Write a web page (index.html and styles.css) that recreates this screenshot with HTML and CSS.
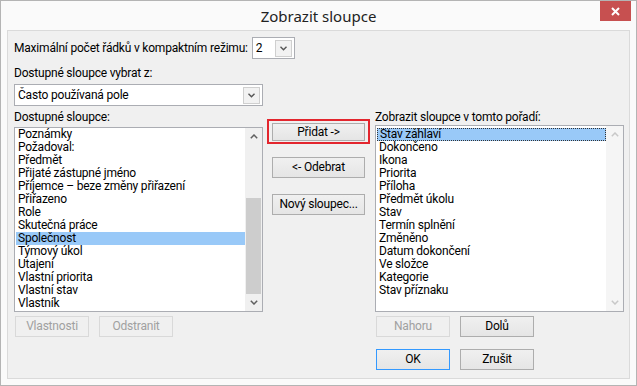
FILE: index.html
```html
<!DOCTYPE html>
<html lang="cs">
<head>
  <meta charset="UTF-8" />
  <title>Zobrazit sloupce</title>
  <link rel="stylesheet" href="styles.css">
</head>
<body>
  <div class="window">
    <div class="titlebar">
      <span class="title">Zobrazit sloupce</span>
      <button class="close" title="Zavřít">
        <svg width="9" height="9" viewBox="0 0 9 9"><path d="M1 1 L8 8 M8 1 L1 8" stroke="#fff" stroke-width="2"/></svg>
      </button>
    </div>

    <div class="client">
      <div class="row">
        <label class="lbl">Maximální počet řádků v kompaktním režimu:</label>
        <div class="combo combo-small">
          <span class="combo-value">2</span>
          <span class="combo-arrow"><svg width="7" height="5" viewBox="0 0 7 5"><path d="M0.5 0.8 L3.5 3.8 L6.5 0.8" fill="none" stroke="#555" stroke-width="1.4"/></svg></span>
        </div>
      </div>

      <div class="lbl lbl-from">Dostupné sloupce vybrat z:</div>
      <div class="combo combo-wide">
        <span class="combo-value">Často používaná pole</span>
        <span class="combo-arrow"><svg width="7" height="5" viewBox="0 0 7 5"><path d="M0.5 0.8 L3.5 3.8 L6.5 0.8" fill="none" stroke="#555" stroke-width="1.4"/></svg></span>
      </div>

      <div class="columns">
        <div class="col">
          <div class="lbl lbl-list">Dostupné sloupce:</div>
          <div class="listbox listbox-left">
            <ul class="items">
              <li>Poznámky</li>
              <li>Požadoval:</li>
              <li>Předmět</li>
              <li>Přijaté zástupné jméno</li>
              <li>Příjemce – beze změny přiřazení</li>
              <li>Přiřazeno</li>
              <li>Role</li>
              <li>Skutečná práce</li>
              <li class="selected">Společnost</li>
              <li>Týmový úkol</li>
              <li>Utajení</li>
              <li>Vlastní priorita</li>
              <li>Vlastní stav</li>
              <li>Vlastník</li>
            </ul>
            <div class="scrollbar">
              <span class="sb-arrow"><svg width="8" height="5" viewBox="0 0 8 5"><path d="M0.8 4.2 L4 1 L7.2 4.2" fill="none" stroke="#606060" stroke-width="1.5"/></svg></span>
              <div class="sb-track"><div class="sb-thumb"></div></div>
              <span class="sb-arrow"><svg width="8" height="5" viewBox="0 0 8 5"><path d="M0.8 0.8 L4 4 L7.2 0.8" fill="none" stroke="#606060" stroke-width="1.5"/></svg></span>
            </div>
          </div>
          <div class="btn-row">
            <button class="btn" disabled>Vlastnosti</button>
            <button class="btn" disabled>Odstranit</button>
          </div>
        </div>

        <div class="col col-mid">
          <div class="mark">
            <button class="btn btn-mid btn-add">Přidat -&gt;</button>
          </div>
          <button class="btn btn-mid btn-remove">&lt;- Odebrat</button>
          <button class="btn btn-mid btn-new">Nový sloupec...</button>
        </div>

        <div class="col">
          <div class="lbl lbl-list">Zobrazit sloupce v tomto pořadí:</div>
          <div class="listbox listbox-right">
            <ul class="items">
              <li class="selected focused">Stav záhlaví</li>
              <li>Dokončeno</li>
              <li>Ikona</li>
              <li>Priorita</li>
              <li>Příloha</li>
              <li>Předmět úkolu</li>
              <li>Stav</li>
              <li>Termín splnění</li>
              <li>Změněno</li>
              <li>Datum dokončení</li>
              <li>Ve složce</li>
              <li>Kategorie</li>
              <li>Stav příznaku</li>
            </ul>
            <div class="scrollbar scrollbar-off">
              <span class="sb-arrow"><svg width="8" height="5" viewBox="0 0 8 5"><path d="M0.8 4.2 L4 1 L7.2 4.2" fill="none" stroke="#c8c8c8" stroke-width="1.5"/></svg></span>
              <div class="sb-track"></div>
              <span class="sb-arrow"><svg width="8" height="5" viewBox="0 0 8 5"><path d="M0.8 0.8 L4 4 L7.2 0.8" fill="none" stroke="#c8c8c8" stroke-width="1.5"/></svg></span>
            </div>
          </div>
          <div class="btn-row">
            <button class="btn" disabled>Nahoru</button>
            <button class="btn">Dolů</button>
          </div>
          <div class="btn-row btn-row-end">
            <button class="btn btn-default">OK</button>
            <button class="btn">Zrušit</button>
          </div>
        </div>
      </div>
    </div>
  </div>
</body>
</html>
```

FILE: styles.css
```css
:root {
  --frame: #fafafa;
  --face: #f0f0f0;
  --text: #000;
  --select: #99c9f8;
  --field-border: #abadb3;
}

* {
  box-sizing: border-box;
}

body {
  margin: 0;
  font-family: Roboto, "Noto Sans", sans-serif;
  font-size: 12px;
  letter-spacing: -0.2px;
  color: var(--text);
}

.window {
  width: 637px;
  height: 386px;
  background: var(--frame);
  border: 1px solid #b4b4b4;
  display: flex;
  flex-direction: column;
}

.titlebar {
  height: 29px;
  position: relative;
  display: flex;
  justify-content: center;
  align-items: center;
}

.title {
  font-family: "Noto Sans", sans-serif;
  font-size: 15px;
  letter-spacing: 0;
  color: #222;
}

.close {
  position: absolute;
  top: 0;
  right: 5px;
  width: 31px;
  height: 20px;
  border: none;
  padding: 0;
  background: #c75050;
  display: flex;
  align-items: center;
  justify-content: center;
}

.client {
  margin: 0 6px;
  height: 349px;
  background: var(--face);
  border: 1px solid #dadada;
  padding: 6px 0 0 6px;
}

.row {
  display: flex;
  align-items: center;
  gap: 4px;
}

.lbl {
  line-height: 15px;
  white-space: nowrap;
}

.lbl-from {
  margin-top: 7px;
}

.combo {
  height: 22px;
  background: #fff;
  border: 1px solid var(--field-border);
  display: flex;
  align-items: center;
  justify-content: space-between;
  padding: 0 2px 0 3px;
}

.combo-small {
  width: 43px;
}

.combo-wide {
  width: 249px;
  margin-top: 3px;
}

.combo-arrow {
  width: 17px;
  height: 17px;
  border: 1px solid #cfcfcf;
  background: #f2f2f2;
  display: flex;
  align-items: center;
  justify-content: center;
}

.columns {
  display: grid;
  grid-template-columns: 249px 94px 249px;
  column-gap: 9px;
  margin-top: 4px;
}

.col {
  display: flex;
  flex-direction: column;
}

.listbox {
  background: #fff;
  border: 1px solid var(--field-border);
  display: flex;
  justify-content: space-between;
}

.listbox-left {
  margin-top: 2px;
  height: 185px;
}

.listbox-right {
  height: 187px;
}

.items {
  list-style: none;
  margin: 0;
  padding: 0 0 0 1px;
  flex: 1;
}

.listbox-right .items {
  padding-top: 2px;
}

.items li {
  height: 13px;
  line-height: 13px;
  padding-left: 2px;
  white-space: nowrap;
}

.items li.selected {
  background: var(--select);
}

.items li.focused {
  outline: 1px dotted #333;
  outline-offset: -1px;
  padding-left: 3px;
}

.scrollbar {
  width: 17px;
  background: #f0f0f0;
  display: flex;
  flex-direction: column;
}

.scrollbar-off {
  background: #f5f5f5;
}

.sb-arrow {
  height: 17px;
  display: flex;
  align-items: center;
  justify-content: center;
}

.sb-track {
  flex: 1;
  display: flex;
  flex-direction: column;
  justify-content: flex-end;
  align-items: center;
}

.sb-thumb {
  width: 15px;
  height: 96px;
  background: #cdcdcd;
}

.btn {
  font-family: inherit;
  font-size: 12px;
  letter-spacing: -0.2px;
  color: var(--text);
  width: 74px;
  height: 21px;
  padding: 0;
  border: 1px solid #adadad;
  background: linear-gradient(#f0f0f0, #e5e5e5);
  line-height: 17px;
}

.btn:disabled {
  color: #a0a0a0;
  border-color: #d9d9d9;
  background: #f0f0f0;
}

.btn-default {
  border-color: #3399ff;
}

.btn-row {
  display: flex;
  gap: 10px;
  margin-top: 4px;
  padding-left: 1px;
}

.btn-row-end {
  margin-top: 12px;
}

.btn-mid {
  width: 93px;
}

.mark {
  margin-top: 9px;
  margin-left: -5px;
  width: 103px;
  height: 25px;
  border: 2px solid #e3262e;
  padding: 2px 0 0 3px;
}

.btn-add {
  height: 18px;
  line-height: 14px;
}

.btn-remove {
  margin-top: 13px;
}

.btn-new {
  margin-top: 16px;
}
```
